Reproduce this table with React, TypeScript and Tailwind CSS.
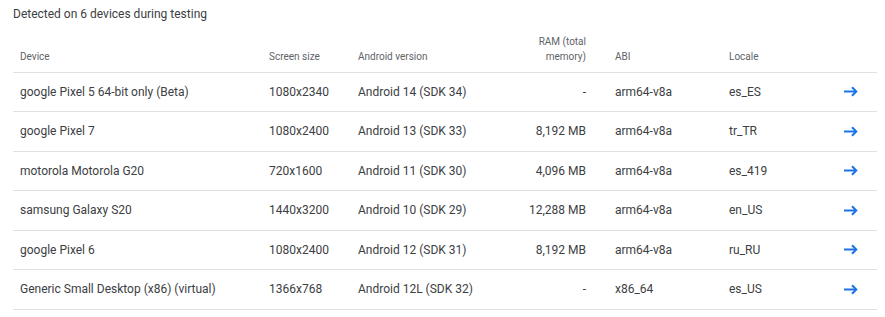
const rows = [
  { device: 'google Pixel 5 64-bit only (Beta)', screen: '1080x2340', android: 'Android 14 (SDK 34)', ram: '-', abi: 'arm64-v8a', locale: 'es_ES' },
  { device: 'google Pixel 7', screen: '1080x2400', android: 'Android 13 (SDK 33)', ram: '8,192 MB', abi: 'arm64-v8a', locale: 'tr_TR' },
  { device: 'motorola Motorola G20', screen: '720x1600', android: 'Android 11 (SDK 30)', ram: '4,096 MB', abi: 'arm64-v8a', locale: 'es_419' },
  { device: 'samsung Galaxy S20', screen: '1440x3200', android: 'Android 10 (SDK 29)', ram: '12,288 MB', abi: 'arm64-v8a', locale: 'en_US' },
  { device: 'google Pixel 6', screen: '1080x2400', android: 'Android 12 (SDK 31)', ram: '8,192 MB', abi: 'arm64-v8a', locale: 'ru_RU' },
  { device: 'Generic Small Desktop (x86) (virtual)', screen: '1366x768', android: 'Android 12L (SDK 32)', ram: '-', abi: 'x86_64', locale: 'es_US' },
];

const ArrowForward = () => (
  <svg width="14" height="11" viewBox="0 0 14 11" fill="none" stroke="#1a73e8" strokeWidth="2">
    <path d="M0 5.5h12" />
    <path d="M8 1.2l4.3 4.3L8 9.8" />
  </svg>
);

export default function App() {
  return (
    <div className="w-[885px] h-[317px] bg-white px-[13px] font-['Roboto',sans-serif]">
      <div className="h-[30px] pt-[6px] text-[12px] leading-[16px] text-[#3c4043]">
        Detected on 6 devices during testing
      </div>
      <table className="w-[864px] table-fixed border-collapse">
        <colgroup>
          <col className="w-[249px]" />
          <col className="w-[89px]" />
          <col className="w-[149px]" />
          <col className="w-[108px]" />
          <col className="w-[114px]" />
          <col className="w-[98px]" />
          <col />
        </colgroup>
        <thead>
          <tr className="h-[42px] border-b border-[#e0e0e0] text-[10px] leading-[15px] text-[#5f6368]">
            <th className="pl-[7px] pb-[8px] align-bottom text-left font-normal">Device</th>
            <th className="pl-[7px] pb-[8px] align-bottom text-left font-normal">Screen size</th>
            <th className="pl-[7px] pb-[8px] align-bottom text-left font-normal">Android version</th>
            <th className="pr-[22px] pb-[8px] pl-[30px] align-bottom text-right font-normal">RAM (total memory)</th>
            <th className="pl-[7px] pb-[8px] align-bottom text-left font-normal">ABI</th>
            <th className="pl-[7px] pb-[8px] align-bottom text-left font-normal">Locale</th>
            <th></th>
          </tr>
        </thead>
        <tbody>
          {rows.map((r, i) => (
            <tr key={i} className="h-[39.5px] border-b border-[#e0e0e0] text-[12px] text-[#3c4043]">
              <td className="pl-[7px]">{r.device}</td>
              <td className="pl-[7px]">{r.screen}</td>
              <td className="pl-[7px]">{r.android}</td>
              <td className="pr-[22px] text-right">{r.ram}</td>
              <td className="pl-[7px]">{r.abi}</td>
              <td className="pl-[7px]">{r.locale}</td>
              <td>
                <div className="flex justify-end pr-[19px]">
                  <ArrowForward />
                </div>
              </td>
            </tr>
          ))}
        </tbody>
      </table>
    </div>
  );
}
